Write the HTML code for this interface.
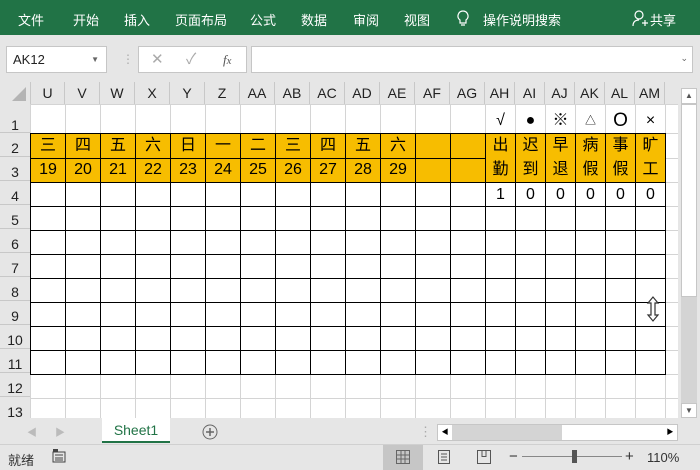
<!DOCTYPE html><html><head><meta charset="utf-8"><style>
*{box-sizing:border-box;margin:0;padding:0}
body{width:700px;height:470px;overflow:hidden;background:#e6e6e6;font-family:"Liberation Sans","Noto Sans CJK SC",sans-serif;position:relative}
.rib{position:absolute;left:0;top:0;width:700px;height:35px;background:#217346;color:#fff;font-size:13px}
.rib span{position:absolute;top:10px}
.box{position:absolute;background:#fff;border:1px solid #c6c6c6}
#colh{position:absolute;left:0;top:82px;height:22px;width:678px;background:#e6e6e6}
#colh div{position:absolute;top:0;height:22px;border-right:1px solid #c8c8c8;text-align:center;font-size:14px;line-height:22px;color:#222}
#rowh div{position:absolute;left:0;width:30px;border-bottom:1px solid #c8c8c8;font-size:14px;text-align:center;color:#222;background:#e6e6e6}
table{position:absolute;left:30px;top:104px;border-collapse:collapse;table-layout:fixed;width:655px;background:#fff;font-size:16px}
td{border:1px solid #d4d4d4;height:24px;padding:0;text-align:center;line-height:22px;overflow:hidden;white-space:nowrap}
tr.r1 td{height:29px;border-bottom-color:#000;vertical-align:bottom;line-height:24px}
tr.o td{background:#f7bd00}
td.b{border-color:#000}
td.m{line-height:24px;white-space:normal}
.tab{position:absolute;left:102px;top:418px;width:68px;height:25px;background:#fff;color:#217346;font-size:14px;text-align:center;line-height:24px;border-bottom:2px solid #217346}
.st{position:absolute;font-size:13px;color:#333}
</style></head><body>
<div class="rib"><span style="left:18px">文件</span><span style="left:73px">开始</span><span style="left:124px">插入</span><span style="left:175px">页面布局</span><span style="left:250px">公式</span><span style="left:301px">数据</span><span style="left:353px">审阅</span><span style="left:404px">视图</span>
<svg style="position:absolute;left:457px;top:10px" width="12" height="17"><path d="M6 1a5 5 0 0 0-3 9v3h6v-3a5 5 0 0 0-3-9zM4 15h4" fill="none" stroke="#fff" stroke-width="1.2"/></svg>
<span style="left:483px">操作说明搜索</span>
<svg style="position:absolute;left:632px;top:10px" width="16" height="18"><circle cx="7" cy="5" r="4" fill="none" stroke="#fff" stroke-width="1.2"/><path d="M1 16c0-5 3-6 6-6M10 13h6M13 10v6" fill="none" stroke="#fff" stroke-width="1.2"/></svg>
<span style="left:650px">共享</span></div>
<div class="box" style="left:6px;top:46px;width:101px;height:27px;font-size:13px;line-height:25px;padding-left:6px;color:#222">AK12<span style="position:absolute;right:7px;font-size:8px;color:#666">▼</span></div>
<div style="position:absolute;left:122px;top:52px;color:#aaa;font-size:12px">⋮</div>
<div class="box" style="left:138px;top:46px;width:109px;height:27px;color:#aaa;font-size:15px;line-height:25px"><span style="position:absolute;left:12px">✕</span><span style="position:absolute;left:47px">✓</span><span style="position:absolute;left:84px;font-family:'Liberation Serif',serif;font-style:italic;color:#555;font-size:13px">f<small>x</small></span></div>
<div class="box" style="left:251px;top:46px;width:442px;height:27px"><span style="position:absolute;right:4px;top:6px;font-size:9px;color:#666">⌄</span></div>
<div id="colh">
<svg style="position:absolute;left:12px;top:5px" width="14" height="14"><path d="M14 0V14H0Z" fill="#b4b4b4"/></svg>
<div style="left:30px;width:35px;border-left:1px solid #c8c8c8">U</div><div style="left:65px;width:35px">V</div><div style="left:100px;width:35px">W</div><div style="left:135px;width:35px">X</div><div style="left:170px;width:35px">Y</div><div style="left:205px;width:35px">Z</div><div style="left:240px;width:35px">AA</div><div style="left:275px;width:35px">AB</div><div style="left:310px;width:35px">AC</div><div style="left:345px;width:35px">AD</div><div style="left:380px;width:35px">AE</div><div style="left:415px;width:35px">AF</div><div style="left:450px;width:35px">AG</div><div style="left:485px;width:30px">AH</div><div style="left:515px;width:30px">AI</div><div style="left:545px;width:30px">AJ</div><div style="left:575px;width:30px">AK</div><div style="left:605px;width:30px">AL</div><div style="left:635px;width:30px">AM</div>
</div>
<div id="rowh">
<div style="top:104px;height:29px;line-height:42px">1</div><div style="top:133px;height:24px;line-height:30px">2</div><div style="top:157px;height:24px;line-height:30px">3</div><div style="top:181px;height:24px;line-height:30px">4</div><div style="top:205px;height:24px;line-height:30px">5</div><div style="top:229px;height:24px;line-height:30px">6</div><div style="top:253px;height:24px;line-height:30px">7</div><div style="top:277px;height:24px;line-height:30px">8</div><div style="top:301px;height:24px;line-height:30px">9</div><div style="top:325px;height:24px;line-height:30px">10</div><div style="top:349px;height:24px;line-height:30px">11</div><div style="top:373px;height:24px;line-height:30px">12</div><div style="top:397px;height:21px;line-height:30px;border:0">13</div>
</div>
<div style="position:absolute;left:0;top:104px;width:678px;height:314px;overflow:hidden">
<table style="left:30px;top:0">
<colgroup><col style="width:35px"><col style="width:35px"><col style="width:35px"><col style="width:35px"><col style="width:35px"><col style="width:35px"><col style="width:35px"><col style="width:35px"><col style="width:35px"><col style="width:35px"><col style="width:35px"><col style="width:35px"><col style="width:35px"><col style="width:30px"><col style="width:30px"><col style="width:30px"><col style="width:30px"><col style="width:30px"><col style="width:30px"><col style="width:20px"></colgroup>
<tr class="r1"><td></td><td></td><td></td><td></td><td></td><td></td><td></td><td></td><td></td><td></td><td></td><td></td><td></td><td>√</td><td>●</td><td>※</td><td style="font-size:11px">△</td><td style="font-size:19px">O</td><td>×</td><td style="border-bottom-color:#d4d4d4"></td></tr>
<tr class="o"><td class="b">三</td><td class="b">四</td><td class="b">五</td><td class="b">六</td><td class="b">日</td><td class="b">一</td><td class="b">二</td><td class="b">三</td><td class="b">四</td><td class="b">五</td><td class="b">六</td><td class="b"></td><td class="b"></td><td class="b m" rowspan="2">出<br>勤</td><td class="b m" rowspan="2">迟<br>到</td><td class="b m" rowspan="2">早<br>退</td><td class="b m" rowspan="2">病<br>假</td><td class="b m" rowspan="2">事<br>假</td><td class="b m" rowspan="2">旷<br>工</td><td style="background:#fff"></td></tr>
<tr class="o"><td class="b">19</td><td class="b">20</td><td class="b">21</td><td class="b">22</td><td class="b">23</td><td class="b">24</td><td class="b">25</td><td class="b">26</td><td class="b">27</td><td class="b">28</td><td class="b">29</td><td class="b"></td><td class="b"></td><td style="background:#fff"></td></tr>
<tr><td class="b"></td><td class="b"></td><td class="b"></td><td class="b"></td><td class="b"></td><td class="b"></td><td class="b"></td><td class="b"></td><td class="b"></td><td class="b"></td><td class="b"></td><td class="b"></td><td class="b"></td><td class="b">1</td><td class="b">0</td><td class="b">0</td><td class="b">0</td><td class="b">0</td><td class="b">0</td><td></td></tr>
<tr><td class="b"></td><td class="b"></td><td class="b"></td><td class="b"></td><td class="b"></td><td class="b"></td><td class="b"></td><td class="b"></td><td class="b"></td><td class="b"></td><td class="b"></td><td class="b"></td><td class="b"></td><td class="b"></td><td class="b"></td><td class="b"></td><td class="b"></td><td class="b"></td><td class="b"></td><td></td></tr>
<tr><td class="b"></td><td class="b"></td><td class="b"></td><td class="b"></td><td class="b"></td><td class="b"></td><td class="b"></td><td class="b"></td><td class="b"></td><td class="b"></td><td class="b"></td><td class="b"></td><td class="b"></td><td class="b"></td><td class="b"></td><td class="b"></td><td class="b"></td><td class="b"></td><td class="b"></td><td></td></tr>
<tr><td class="b"></td><td class="b"></td><td class="b"></td><td class="b"></td><td class="b"></td><td class="b"></td><td class="b"></td><td class="b"></td><td class="b"></td><td class="b"></td><td class="b"></td><td class="b"></td><td class="b"></td><td class="b"></td><td class="b"></td><td class="b"></td><td class="b"></td><td class="b"></td><td class="b"></td><td></td></tr>
<tr><td class="b"></td><td class="b"></td><td class="b"></td><td class="b"></td><td class="b"></td><td class="b"></td><td class="b"></td><td class="b"></td><td class="b"></td><td class="b"></td><td class="b"></td><td class="b"></td><td class="b"></td><td class="b"></td><td class="b"></td><td class="b"></td><td class="b"></td><td class="b"></td><td class="b"></td><td></td></tr>
<tr><td class="b"></td><td class="b"></td><td class="b"></td><td class="b"></td><td class="b"></td><td class="b"></td><td class="b"></td><td class="b"></td><td class="b"></td><td class="b"></td><td class="b"></td><td class="b"></td><td class="b"></td><td class="b"></td><td class="b"></td><td class="b"></td><td class="b"></td><td class="b"></td><td class="b"></td><td></td></tr>
<tr><td class="b"></td><td class="b"></td><td class="b"></td><td class="b"></td><td class="b"></td><td class="b"></td><td class="b"></td><td class="b"></td><td class="b"></td><td class="b"></td><td class="b"></td><td class="b"></td><td class="b"></td><td class="b"></td><td class="b"></td><td class="b"></td><td class="b"></td><td class="b"></td><td class="b"></td><td></td></tr>
<tr><td class="b"></td><td class="b"></td><td class="b"></td><td class="b"></td><td class="b"></td><td class="b"></td><td class="b"></td><td class="b"></td><td class="b"></td><td class="b"></td><td class="b"></td><td class="b"></td><td class="b"></td><td class="b"></td><td class="b"></td><td class="b"></td><td class="b"></td><td class="b"></td><td class="b"></td><td></td></tr>
<tr><td></td><td></td><td></td><td></td><td></td><td></td><td></td><td></td><td></td><td></td><td></td><td></td><td></td><td></td><td></td><td></td><td></td><td></td><td></td><td></td></tr>
<tr><td></td><td></td><td></td><td></td><td></td><td></td><td></td><td></td><td></td><td></td><td></td><td></td><td></td><td></td><td></td><td></td><td></td><td></td><td></td><td></td></tr>
</table></div>
<svg style="position:absolute;left:645px;top:296px" width="16" height="26"><path d="M8 1L3 7H6V19H3L8 25L13 19H10V7H13Z" fill="#fff" stroke="#333" stroke-width="1.2"/></svg>
<div style="position:absolute;left:678px;top:104px;width:22px;height:314px;background:#e6e6e6"></div>
<div style="position:absolute;left:681px;top:88px;width:16px;height:16px;background:#fff;border:1px solid #c6c6c6;font-size:8px;text-align:center;line-height:14px;color:#555">▲</div>
<div style="position:absolute;left:681px;top:104px;width:16px;height:193px;background:#fff;border:1px solid #c6c6c6"></div>
<div style="position:absolute;left:681px;top:297px;width:16px;height:106px;background:#d4d4d4"></div>
<div style="position:absolute;left:681px;top:403px;width:16px;height:15px;background:#fff;border:1px solid #c6c6c6;font-size:8px;text-align:center;line-height:13px;color:#555">▼</div>
<div style="position:absolute;left:0;top:418px;width:700px;height:26px;background:#e6e6e6"></div>
<div class="st" style="left:27px;top:424px;color:#bbb;font-size:10px">◀</div><div class="st" style="left:55px;top:424px;color:#bbb;font-size:10px">▶</div>
<div class="tab">Sheet1</div>
<svg style="position:absolute;left:202px;top:424px" width="16" height="16"><circle cx="8" cy="8" r="7" fill="none" stroke="#666"/><path d="M4 8H12M8 4V12" stroke="#666" stroke-width="1.5"/></svg>
<div class="st" style="left:419px;top:424px;color:#aaa">⋮</div>
<div style="position:absolute;left:437px;top:424px;width:241px;height:17px;background:#d4d4d4;border:1px solid #c6c6c6"><div style="position:absolute;left:0;top:0;width:14px;height:15px;background:#fff;font-size:7px;line-height:15px;text-align:center">◀</div><div style="position:absolute;left:124px;top:0;width:101px;height:15px;background:#fff"></div><div style="position:absolute;right:0;top:0;width:14px;height:15px;background:#fff;font-size:7px;line-height:15px;text-align:center">▶</div></div>
<div style="position:absolute;left:0;top:444px;width:700px;height:26px;background:#e6e6e6;border-top:1px solid #d0d0d0"></div>
<div class="st" style="left:8px;top:450px">就绪</div>
<svg style="position:absolute;left:52px;top:449px" width="14" height="14"><rect x="1" y="3" width="12" height="10" fill="none" stroke="#444"/><path d="M3 6h8M3 9h8M3 11h8" stroke="#444"/><rect x="1" y="0" width="5" height="3" fill="#444"/></svg>
<div style="position:absolute;left:383px;top:445px;width:40px;height:25px;background:#c6c6c6"></div>
<svg style="position:absolute;left:396px;top:450px" width="14" height="14"><path d="M0.5 .5h13v13H.5zM5 0v14M9 0v14M0 5h14M0 9h14" fill="none" stroke="#666"/></svg>
<svg style="position:absolute;left:438px;top:450px" width="12" height="14"><path d="M.5 .5h11v13H.5zM3 4h6M3 7h6M3 10h6" fill="none" stroke="#555"/></svg>
<svg style="position:absolute;left:477px;top:450px" width="14" height="14"><path d="M.5 .5h13v13H.5zM5 .5v6h4v-6" fill="none" stroke="#555"/></svg>
<div class="st" style="left:509px;top:448px;font-size:15px">−</div>
<div style="position:absolute;left:522px;top:456px;width:100px;height:1px;background:#888"></div>
<div style="position:absolute;left:572px;top:450px;width:5px;height:13px;background:#555"></div>
<div class="st" style="left:625px;top:448px;font-size:15px">+</div>
<div class="st" style="left:647px;top:450px">110%</div>
</body></html>
